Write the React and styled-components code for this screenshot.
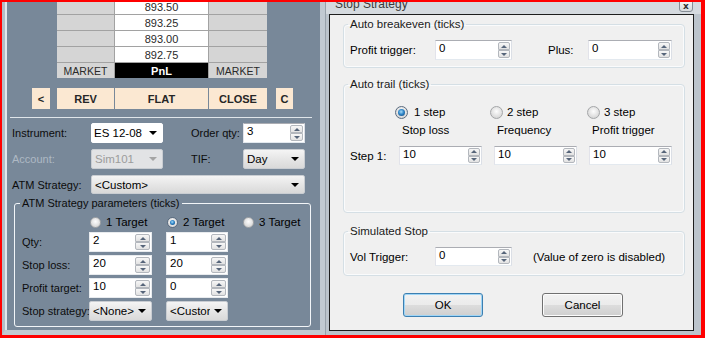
import React from 'react';
import styled, { createGlobalStyle } from 'styled-components';

const GlobalStyle = createGlobalStyle`
  html, body {
    margin: 0;
    padding: 0;
    overflow: hidden;
  }
  body {
    font-family: "Liberation Sans", Arial, sans-serif;
    background: #fff;
  }
`;

const Screen = styled.div`
  width: 705px;
  height: 338px;
  box-sizing: border-box;
  border: solid #f00;
  border-width: 2px 4px 3px 2px;
  display: flex;
  overflow: hidden;
  background: #c3cad1;
`;

/* ---------- left: order entry panel ---------- */

const OrderPanel = styled.div`
  flex: none;
  width: 323px;
  box-sizing: border-box;
  display: flex;
  flex-direction: column;
  background: #788899;
  border-left: 3px solid #b4bdc6;
  border-right: 5px solid #c2cad2;
  border-bottom: 5px solid #c3cad1;
  box-shadow: inset 2px 0 0 #e1e7ec;
`;

const Ladder = styled.div`
  display: grid;
  grid-template-columns: 57px 93px 58px;
  grid-auto-rows: 15px;
  gap: 1px;
  width: max-content;
  margin: -3px 0 0 52px;
  background: #a2a2a2;
`;

const LadderCell = styled.div`
  display: flex;
  align-items: center;
  justify-content: center;
  font-size: ${p => (p.$tone === 'side' ? '10.5px' : '11px')};
  font-weight: ${p => (p.$tone === 'pnl' ? 'bold' : 'normal')};
  color: ${p => (p.$tone === 'pnl' ? '#fff' : '#2a2a2a')};
  background: ${p => (p.$tone === 'price' ? '#fff' : p.$tone === 'pnl' ? '#000' : '#d5d5d5')};
`;

const OrderButtons = styled.div`
  display: flex;
  height: 21px;
  margin: 10px 0 0 27px;
`;

const OrderButton = styled.button`
  width: ${p => p.$w}px;
  margin: 0 0 0 ${p => p.$gap || 0}px;
  padding: 0;
  border: none;
  background: #fbe8d2;
  color: #262626;
  font: bold 11px "Liberation Sans", Arial, sans-serif;
`;

const Separator = styled.div`
  width: 302px;
  margin: 8px 0 0 5px;
  border-top: 1px solid #dfe5ea;
`;

const FormRow = styled.div`
  display: grid;
  grid-template-columns: ${p => p.$cols};
  align-items: center;
  height: ${p => p.$h || 20}px;
  margin-top: ${p => p.$top}px;
  padding-left: 7px;
`;

const PanelLabel = styled.span`
  font-size: 11px;
  white-space: nowrap;
  color: ${p => (p.$disabled ? '#aeb9c4' : '#0c0c0c')};
`;

const Combo = styled.div`
  box-sizing: border-box;
  height: 100%;
  display: flex;
  align-items: center;
  padding-left: ${p => (p.$variant === 'white' ? 2 : 3)}px;
  border-radius: 2px;
  font-size: 11.5px;
  color: ${p => (p.$variant === 'disabled' ? '#9c9c9c' : '#000')};
  border: 1px solid ${p => (p.$variant === 'white' ? '#fff' : '#c9cdd2')};
  background: ${p =>
    p.$variant === 'white'
      ? '#fff'
      : p.$variant === 'disabled'
      ? '#e2e3e5'
      : 'linear-gradient(#f4f4f4, #e6e6e6 50%, #d9d9d9)'};
`;

const ComboText = styled.span`
  flex: 1;
  overflow: hidden;
  white-space: nowrap;
`;

const ComboArrow = styled.span`
  flex: none;
  width: 0;
  height: 0;
  margin: 0 5px 0 4px;
  border-left: 4px solid transparent;
  border-right: 4px solid transparent;
  border-top: 4px solid ${p => (p.$disabled ? '#a4a4a4' : '#000')};
`;

const PanelGroup = styled.fieldset`
  box-sizing: border-box;
  width: 297px;
  min-width: 0;
  margin: 3px 0 0 9px;
  padding: 5px 0 5px 7px;
  border: 1px solid #f2f5f8;
  border-radius: 3px;
`;

const PanelLegend = styled.legend`
  padding: 0 2px;
  margin-left: -2px;
  font-size: 11px;
  line-height: 13px;
  color: #0c0c0c;
`;

const ParamGrid = styled.div`
  display: grid;
  grid-template-columns: 53px 63px 62px auto;
  grid-template-rows: 14px;
  grid-auto-rows: 20px;
  column-gap: 14px;
  row-gap: 3px;
  align-items: center;
`;

const RadioSpacer = styled.span`
  height: 14px;
`;

/* ---------- shared widgets ---------- */

const SpinField = styled.div`
  box-sizing: border-box;
  height: 100%;
  display: flex;
  background: #fff;
  border: 1px solid ${p => (p.$flat ? '#e8ebee' : '#abadb3')};
  border-bottom-color: ${p => (p.$flat ? '#e8ebee' : '#e3e9ef')};
  border-left-color: ${p => (p.$flat ? '#e8ebee' : '#e2e3ea')};
  border-right-color: ${p => (p.$flat ? '#e8ebee' : '#dbdfe6')};
`;

const SpinValue = styled.span`
  flex: 1;
  padding: 0 0 0 3px;
  font-size: 11.5px;
  line-height: 14px;
  color: #000;
`;

const SpinButtons = styled.div`
  flex: none;
  width: ${p => p.$w}px;
  display: flex;
  flex-direction: column;
  padding: 1px 1px 1px 0;
`;

const SpinStep = styled.div`
  flex: 1;
  display: flex;
  align-items: center;
  justify-content: center;
  border: 1px solid #b3b7bd;
  border-radius: ${p => (p.$down ? '0 0 2px 2px' : '2px 2px 0 0')};
  background: linear-gradient(#f7f7f7, #e2e2e2);
  &::after {
    content: '';
    width: 0;
    height: 0;
    border-left: 3px solid transparent;
    border-right: 3px solid transparent;
    ${p => (p.$down ? 'border-top: 3px solid #56657a;' : 'border-bottom: 3px solid #56657a;')}
  }
`;

function SpinBox({ value, flat, btn = 12 }) {
  return (
    <SpinField $flat={flat}>
      <SpinValue>{value}</SpinValue>
      <SpinButtons $w={btn}>
        <SpinStep />
        <SpinStep $down />
      </SpinButtons>
    </SpinField>
  );
}

const RadioOption = styled.label`
  display: flex;
  align-items: center;
  gap: ${p => p.$gap}px;
  margin-left: ${p => p.$shift || 0}px;
  font-size: ${p => p.$font};
  color: #000;
  white-space: nowrap;
`;

const RadioDot = styled.span`
  flex: none;
  box-sizing: border-box;
  width: ${p => p.$size}px;
  height: ${p => p.$size}px;
  border-radius: 50%;
  display: flex;
  align-items: center;
  justify-content: center;
  border: 1px solid ${p => (p.$checked ? '#5b6c80' : '#a4a6a8')};
  background: radial-gradient(circle at 50% 40%, #fdfdfd 0, #dadada 70%, #cfcfcf 100%);
  &::after {
    content: '';
    display: ${p => (p.$checked ? 'block' : 'none')};
    width: ${p => p.$size - 6}px;
    height: ${p => p.$size - 6}px;
    border-radius: 50%;
    background: radial-gradient(circle at 45% 40%, #a8dcfa 0, #2f86c8 45%, #0d3b6e 100%);
  }
`;

function Radio({ label, checked, size, gap, font, shift }) {
  return (
    <RadioOption $gap={gap} $font={font} $shift={shift}>
      <RadioDot $size={size} $checked={checked} />
      {label}
    </RadioOption>
  );
}

/* ---------- right: stop strategy dialog ---------- */

const Dialog = styled.div`
  flex: 1;
  display: flex;
  flex-direction: column;
  padding: 0 7px 4px 3px;
  border-left: 1px solid #98a1aa;
  background: linear-gradient(#d5dadf 0, #d5dadf 12px, #bcc4cc 12px);
`;

const TitleBar = styled.div`
  height: 12px;
  flex: none;
  display: flex;
  justify-content: space-between;
  align-items: flex-start;
`;

const TitleText = styled.span`
  margin: -5px 0 0 6px;
  font-size: 12px;
  line-height: 14px;
  color: #3a3a3a;
`;

const CloseButton = styled.div`
  box-sizing: border-box;
  width: 14px;
  height: 12px;
  margin: -2px 1px 0 0;
  display: flex;
  align-items: flex-end;
  justify-content: center;
  border: 1px solid #868d95;
  border-radius: 0 0 3px 3px;
  background: linear-gradient(#f6f6f6, #d6d9dc);
  font: bold 9px "DejaVu Sans", sans-serif;
  line-height: 9px;
  color: #333;
`;

const Client = styled.div`
  flex: 1;
  display: flex;
  flex-direction: column;
  padding: 3px 8px 0 13px;
  border: 1px solid #1e1e1e;
  background: #f0f0f0;
`;

const Group = styled.fieldset`
  min-width: 0;
  margin: ${p => p.$top || 0}px 0 0 0;
  padding: ${p => p.$pad};
  border: 1px solid #d5dfe5;
  border-radius: 4px;
  box-shadow: inset 0 0 0 1px #fafbfc;
`;

const GroupLegend = styled.legend`
  padding: 0 2px;
  margin-left: -2px;
  font-size: 11.5px;
  line-height: 13px;
  color: #1a1a1a;
`;

const SettingsRow = styled.div`
  display: grid;
  grid-template-columns: ${p => p.$cols};
  align-items: center;
  height: ${p => p.$h || 20}px;
`;

const DialogLabel = styled.span`
  font-size: 11.5px;
  color: #000;
  white-space: nowrap;
  margin-left: ${p => p.$shift || 0}px;
`;

const TrailGrid = styled.div`
  display: grid;
  grid-template-columns: 37px repeat(3, 83px);
  grid-template-rows: 14px 14px 19px;
  column-gap: 12px;
  row-gap: 4px;
  align-items: center;
`;

const StepLabel = styled(DialogLabel)`
  margin-top: 10px;
`;

const StepCell = styled.div`
  height: 19px;
  margin-top: 10px;
`;

const ButtonBar = styled.div`
  display: flex;
  gap: 59px;
  margin: 17px 0 0 60px;
`;

const DialogButton = styled.button`
  box-sizing: border-box;
  width: ${p => p.$w}px;
  height: 24px;
  padding: 0;
  border: 1px solid ${p => (p.$focused ? '#3c7fb1' : '#707070')};
  border-radius: 3px;
  background: linear-gradient(#f2f2f2 0%, #ebebeb 49%, #dddddd 50%, #cfcfcf 100%);
  box-shadow: inset 0 0 0 1px ${p => (p.$focused ? '#9fd5f6' : '#fcfcfc')};
  font: 11.5px "Liberation Sans", Arial, sans-serif;
  color: #000;
`;

const prices = ['893.50', '893.25', '893.00', '892.75'];

export default function App() {
  return (
    <>
      <GlobalStyle />
      <Screen>
        <OrderPanel>
          <Ladder>
            {prices.map(p => (
              <React.Fragment key={p}>
                <LadderCell $tone="blank" />
                <LadderCell $tone="price">{p}</LadderCell>
                <LadderCell $tone="blank" />
              </React.Fragment>
            ))}
            <LadderCell $tone="side">MARKET</LadderCell>
            <LadderCell $tone="pnl">PnL</LadderCell>
            <LadderCell $tone="side">MARKET</LadderCell>
          </Ladder>

          <OrderButtons>
            <OrderButton $w={18}>&lt;</OrderButton>
            <OrderButton $w={57} $gap={7}>REV</OrderButton>
            <OrderButton $w={93} $gap={1}>FLAT</OrderButton>
            <OrderButton $w={58} $gap={1}>CLOSE</OrderButton>
            <OrderButton $w={17} $gap={9}>C</OrderButton>
          </OrderButtons>

          <Separator />

          <FormRow $cols="79px 72px 28px 52px 62px" $top={5}>
            <PanelLabel>Instrument:</PanelLabel>
            <Combo $variant="white">
              <ComboText>ES 12-08</ComboText>
              <ComboArrow />
            </Combo>
            <span />
            <PanelLabel>Order qty:</PanelLabel>
            <SpinBox value="3" btn={13} />
          </FormRow>

          <FormRow $cols="79px 72px 28px 52px 62px" $top={6}>
            <PanelLabel $disabled>Account:</PanelLabel>
            <Combo $variant="disabled">
              <ComboText>Sim101</ComboText>
              <ComboArrow $disabled />
            </Combo>
            <span />
            <PanelLabel>TIF:</PanelLabel>
            <Combo $variant="gradient">
              <ComboText>Day</ComboText>
              <ComboArrow />
            </Combo>
          </FormRow>

          <FormRow $cols="79px 214px" $top={6} $h={19}>
            <PanelLabel>ATM Strategy:</PanelLabel>
            <Combo $variant="gradient">
              <ComboText>&lt;Custom&gt;</ComboText>
              <ComboArrow />
            </Combo>
          </FormRow>

          <PanelGroup>
            <PanelLegend>ATM Strategy parameters (ticks)</PanelLegend>
            <ParamGrid>
              <RadioSpacer />
              <Radio label="1 Target" size={11} gap={5} font="11.5px" shift={1} />
              <Radio label="2 Target" checked size={11} gap={5} font="11.5px" shift={1} />
              <Radio label="3 Target" size={11} gap={5} font="11.5px" shift={1} />

              <PanelLabel>Qty:</PanelLabel>
              <SpinBox value="2" flat btn={15} />
              <SpinBox value="1" flat btn={15} />
              <span />

              <PanelLabel>Stop loss:</PanelLabel>
              <SpinBox value="20" flat btn={15} />
              <SpinBox value="20" flat btn={15} />
              <span />

              <PanelLabel>Profit target:</PanelLabel>
              <SpinBox value="10" flat btn={15} />
              <SpinBox value="0" flat btn={15} />
              <span />

              <PanelLabel>Stop strategy:</PanelLabel>
              <Combo $variant="gradient">
                <ComboText>&lt;None&gt;</ComboText>
                <ComboArrow />
              </Combo>
              <Combo $variant="gradient">
                <ComboText>&lt;Custom&gt;</ComboText>
                <ComboArrow />
              </Combo>
              <span />
            </ParamGrid>
          </PanelGroup>
        </OrderPanel>

        <Dialog>
          <TitleBar>
            <TitleText>Stop Strategy</TitleText>
            <CloseButton>x</CloseButton>
          </TitleBar>
          <Client>
            <Group $pad="9px 0 7px 6px">
              <GroupLegend>Auto breakeven (ticks)</GroupLegend>
              <SettingsRow $cols="85px 77px 36px 40px 84px">
                <DialogLabel>Profit trigger:</DialogLabel>
                <SpinBox value="0" />
                <span />
                <DialogLabel>Plus:</DialogLabel>
                <SpinBox value="0" />
              </SettingsRow>
            </Group>

            <Group $top={10} $pad="14px 0 52px 6px">
              <GroupLegend>Auto trail (ticks)</GroupLegend>
              <TrailGrid>
                <span />
                <Radio label="1 step" checked size={13} gap={6} font="11.5px" shift={-4} />
                <Radio label="2 step" size={13} gap={4} font="11.5px" shift={-4} />
                <Radio label="3 step" size={13} gap={4} font="11.5px" shift={-2} />

                <span />
                <DialogLabel $shift={3}>Stop loss</DialogLabel>
                <DialogLabel $shift={3}>Frequency</DialogLabel>
                <DialogLabel $shift={3}>Profit trigger</DialogLabel>

                <StepLabel>Step 1:</StepLabel>
                <StepCell><SpinBox value="10" /></StepCell>
                <StepCell><SpinBox value="10" /></StepCell>
                <StepCell><SpinBox value="10" /></StepCell>
              </TrailGrid>
            </Group>

            <Group $top={12} $pad="9px 0 9px 6px">
              <GroupLegend>Simulated Stop</GroupLegend>
              <SettingsRow $cols="85px 77px 21px auto" $h={19}>
                <DialogLabel>Vol Trigger:</DialogLabel>
                <SpinBox value="0" />
                <span />
                <DialogLabel>(Value of zero is disabled)</DialogLabel>
              </SettingsRow>
            </Group>

            <ButtonBar>
              <DialogButton $w={80} $focused>OK</DialogButton>
              <DialogButton $w={81}>Cancel</DialogButton>
            </ButtonBar>
          </Client>
        </Dialog>
      </Screen>
    </>
  );
}
